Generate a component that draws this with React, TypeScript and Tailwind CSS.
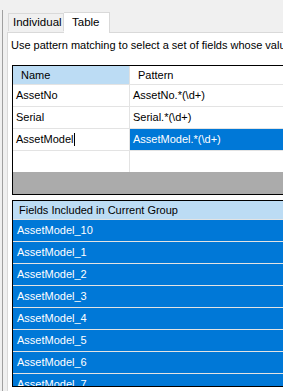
import React from "react";

const rows1 = [
  { name: "AssetNo", pattern: "AssetNo.*(\\d+)", sel: false },
  { name: "Serial", pattern: "Serial.*(\\d+)", sel: false },
  { name: "AssetModel", pattern: "AssetModel.*(\\d+)", sel: true },
];

const fields = [
  "AssetModel_10",
  "AssetModel_1",
  "AssetModel_2",
  "AssetModel_3",
  "AssetModel_4",
  "AssetModel_5",
  "AssetModel_6",
  "AssetModel_7",
];

export default function App() {
  return (
    <div
      className="w-[283px] h-[391px] bg-[#f0f0f0] overflow-hidden flex text-[11px] text-black"
      style={{ fontFamily: '"Liberation Sans", Arial, sans-serif' }}
    >
      <div className="w-[2px] shrink-0" />
      <div className="w-[1px] shrink-0 mt-[10px] bg-[#a0a0a0]" />
      <div className="w-[4px] shrink-0" />
      <div className="flex-1 min-w-0 flex flex-col">
        {/* tabs */}
        <div className="flex items-end h-[32px] shrink-0 pl-[1px]">
          <div className="w-[56px] h-[18px] border border-b-0 border-[#d9d9d9] bg-[#f0f0f0] flex items-center pl-[4px] mb-[1px] text-[11.5px] whitespace-nowrap">
            Individual
          </div>
          <div className="w-[46px] h-[21px] border border-b-0 border-l-0 border-[#d9d9d9] bg-white flex items-center pl-[8px] -mb-[1px] relative z-10 text-[11.5px]">
            Table
          </div>
        </div>
        {/* panel */}
        <div className="flex-1 min-h-0 bg-white border-l border-t border-[#d9d9d9] flex flex-col pl-[3px]">
          <div className="h-[23px] flex items-center whitespace-nowrap pt-[2px] overflow-hidden">
            Use pattern matching to select a set of fields whose values
          </div>
          <div className="h-[9px] shrink-0" />
          {/* grid 1 */}
          <div className="border border-r-0 border-black flex flex-col ml-[1px] mr-[-10px] shrink-0">
            <div className="flex h-[18px]">
              <div className="w-[116px] bg-[#bcdcf4] flex items-center pl-[8px]">Name</div>
              <div className="w-[1px] bg-[#e0e0e0]" />
              <div className="flex-1 flex items-center pl-[8px]">Pattern</div>
            </div>
            {rows1.map((r) => (
              <div key={r.name} className="flex h-[22px] border-t border-[#e3e3e3]">
                <div className="w-[116px] flex items-center pl-[3px]">
                  {r.name}
                  {r.sel && <span className="inline-block w-[1px] h-[13px] bg-black ml-[1px]" />}
                </div>
                <div className="w-[1px] bg-[#e3e3e3]" />
                <div
                  className={
                    "flex-1 flex items-center pl-[3px] " +
                    (r.sel ? "bg-[#0078d7] text-white" : "")
                  }
                >
                  {r.pattern}
                </div>
              </div>
            ))}
            <div className="flex h-[22px] border-t border-[#e3e3e3]">
              <div className="w-[116px]" />
              <div className="w-[1px] bg-[#e3e3e3]" />
              <div className="flex-1" />
            </div>
            <div className="h-[22px] bg-[#ababab]" />
          </div>
          <div className="h-[5px] shrink-0" />
          {/* grid 2 */}
          <div className="border border-r-0 border-black flex flex-col ml-[1px] mr-[-10px] h-[187px] overflow-hidden shrink-0">
            <div className="h-[18px] shrink-0 bg-[#bcdcf4] flex items-center pl-[6px]">
              Fields Included in Current Group
            </div>
            {fields.map((f) => (
              <div
                key={f}
                className="h-[22px] shrink-0 bg-[#0078d7] text-white flex items-center pl-[4px] border-t border-[#e3e3e3]"
              >
                {f}
              </div>
            ))}
          </div>
        </div>
      </div>
    </div>
  );
}
